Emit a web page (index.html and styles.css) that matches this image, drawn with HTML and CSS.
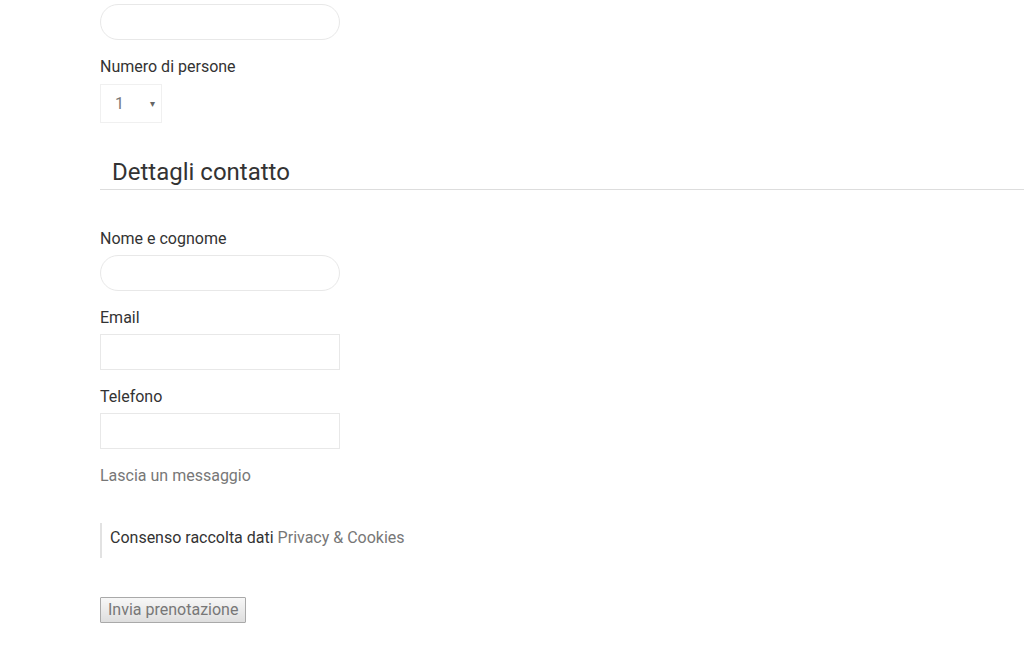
FILE: index.html
```html
<!DOCTYPE html>
<html lang="it">
<head>
  <meta charset="UTF-8" />
  <meta name="viewport" content="width=device-width, initial-scale=1.0"/>
  <title>Prenotazione</title>
  <link rel="stylesheet" href="styles.css">
</head>
<body>
  <form class="booking" action="#" method="post">
    <div class="field">
      <input type="text" class="round-input" name="data">
    </div>
    <div class="field">
      <label for="persone">Numero di persone</label>
      <div class="select-box">
        <span class="select-value">1</span>
        <span class="select-arrow">&#9662;</span>
      </div>
    </div>

    <h3 class="section-title">Dettagli contatto</h3>

    <div class="field">
      <label for="nome">Nome e cognome</label>
      <input type="text" id="nome" class="round-input" name="nome">
    </div>
    <div class="field">
      <label for="email">Email</label>
      <input type="email" id="email" class="square-input" name="email">
    </div>
    <div class="field">
      <label for="tel">Telefono</label>
      <input type="tel" id="tel" class="square-input" name="tel">
    </div>
    <a href="#" class="message-link">Lascia un messaggio</a>

    <blockquote class="consent">
      Consenso raccolta dati <a href="#">Privacy &amp; Cookies</a>
    </blockquote>

    <button type="submit" class="submit-btn">Invia prenotazione</button>
  </form>
</body>
</html>
```

FILE: styles.css
```css
html, body {
  margin: 0;
  padding: 0;
  background: #fff;
  font-family: Roboto, "Liberation Sans", sans-serif;
  font-size: 16px;
  color: #333;
}
.booking {
  padding: 4px 0 0 100px;
}
.field {
  margin-bottom: 14px;
}
.field label {
  display: block;
  line-height: 24px;
  padding-top: 1px;
  margin-bottom: 4px;
}
.round-input,
.square-input {
  display: block;
  box-sizing: border-box;
  width: 240px;
  height: 36px;
  margin: 0;
  padding: 0 14px;
  border: 1px solid #e8e8e8;
  background: #fff;
  font: inherit;
  outline: none;
}
.round-input {
  border-radius: 18px;
}
.square-input {
  border-radius: 0;
}
.select-box {
  box-sizing: border-box;
  width: 62px;
  height: 39px;
  margin-top: 5px;
  border: 1px solid #f0f0f0;
  display: flex;
  align-items: center;
  padding: 0 0 0 14px;
  color: #777;
}
.select-value {
  flex: 1;
}
.select-arrow {
  font-size: 10px;
  color: #666;
  margin-right: 6px;
}
.section-title {
  margin: 35px 0 36px 0;
  padding: 0 0 3px 12px;
  font-size: 24px;
  line-height: 28px;
  font-weight: 400;
  color: #333;
  border-bottom: 1px solid #ddd;
}
.message-link {
  display: block;
  line-height: 24px;
  padding-top: 1px;
  color: #777;
  text-decoration: none;
}
.consent {
  margin: 35px 0 0 0;
  padding: 3px 0 8px 8px;
  line-height: 24px;
  border-left: 2px solid #e2e2e2;
  color: #333;
}
.consent a {
  color: #777;
  text-decoration: none;
}
.submit-btn {
  display: block;
  margin-top: 39px;
  height: 26px;
  padding: 0 7px 2px;
  border: 1px solid #a9a9a9;
  border-radius: 1px;
  background: linear-gradient(#f7f7f7, #dedede);
  color: #777;
  font: inherit;
  font-size: 16px;
}
```
